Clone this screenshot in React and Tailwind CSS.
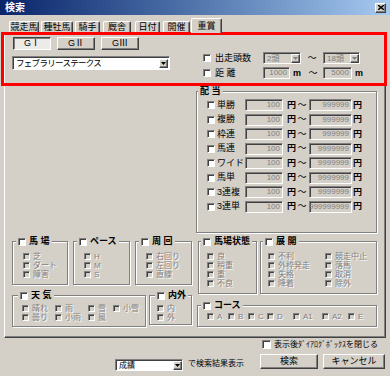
import React from 'react'

const raised = 'border border-t-white border-l-white border-r-[#404040] border-b-[#404040] shadow-[inset_-1px_-1px_0_#808080]'
const pressed = 'border border-t-[#404040] border-l-[#404040] border-r-white border-b-white shadow-[inset_1px_1px_0_#808080]'
const sunken = 'border border-t-[#808080] border-l-[#808080] border-r-white border-b-white shadow-[inset_1px_1px_0_#404040]'
const gray = 'text-[#808080] [text-shadow:1px_1px_0_#fff]'

const Check = ({ off, big }) => (
  <span
    className={`block shrink-0 ${big ? 'w-[9px] h-[9px]' : off ? 'w-[7px] h-[7px]' : 'w-[8px] h-[8px]'} ${sunken} ${off ? 'bg-[#d4d0c8]' : 'bg-white'}`}
  />
)

const DropBtn = ({ off }) => (
  <span className={`flex items-center justify-center w-[9px] h-full bg-[#d4d0c8] ${raised}`}>
    <svg width="5" height="3" viewBox="0 0 5 3">
      <path d="M0 0h5L2.5 3z" fill={off ? '#808080' : '#000'} />
    </svg>
  </span>
)

const Combo = ({ w, text, off }) => (
  <div className={`${w} h-[12px] flex items-stretch pt-[1px] pl-[1px] ${sunken} ${off ? 'bg-[#d4d0c8]' : 'bg-white'}`}>
    <span className={`flex-1 flex items-center pl-[2px] text-[8px] leading-none ${off ? 'text-[#808080]' : 'text-black'}`}>{text}</span>
    <DropBtn off={off} />
  </div>
)

const Field = ({ w, v }) => (
  <span className={`${w} h-[12px] shrink-0 flex items-center justify-end pr-[2px] bg-[#d4d0c8] ${sunken} text-[8px] leading-none text-[#808080]`}>
    {v}
  </span>
)

const Group = ({ cls, hl, head, children }) => (
  <div className={`relative shrink-0 border border-[#808080] shadow-[inset_1px_1px_0_#fff,1px_1px_0_#fff] ${cls}`}>
    <div className={`absolute top-[-5px] ${hl} h-[9px] px-[2px] flex items-center gap-[3px] bg-[#d4d0c8]`}>
      {head}
    </div>
    {children}
  </div>
)

const Head = ({ t }) => (
  <>
    <Check />
    <span className="text-[9px] leading-none font-bold whitespace-pre">{t}</span>
  </>
)

const Item = ({ t, cls = '' }) => (
  <div className={`h-[9px] flex items-center ${cls}`}>
    <Check off />
    <span className={`ml-[3px] text-[8px] leading-none whitespace-nowrap ${gray}`}>{t}</span>
  </div>
)

const tabs = [
  ['競走馬', 'w-[30px]', ''],
  ['種牡馬', 'w-[32px]', 'ml-[2px]'],
  ['騎手', 'w-[25px]', 'ml-[2px]'],
  ['厩舎', 'w-[28px]', 'ml-[3px]'],
  ['日付', 'w-[25px]', 'ml-[4px]'],
  ['開催', 'w-[27px]', 'ml-[3px]'],
]

const pays = [
  ['単勝', '999999'],
  ['複勝', '999999'],
  ['枠連', '999999'],
  ['馬連', '9999999'],
  ['ワイド', '9999999'],
  ['馬単', '9999999'],
  ['3連複', '9999999'],
  ['3連単', '999999999'],
]

const courses = [
  ['A', 'w-[21px]'],
  ['B', 'w-[20px]'],
  ['C', 'w-[19px]'],
  ['D', 'w-[26px]'],
  ['A1', 'w-[29px]'],
  ['A2', 'w-[26px]'],
  ['E', ''],
]

export default function App() {
  return (
    <div className="relative w-[390px] h-[376px] overflow-hidden bg-[#d4d0c8] font-['Liberation_Sans','Noto_Sans_CJK_JP',sans-serif] text-black">
      {/* title bar */}
      <div className="h-[15px] flex items-center justify-between pl-[5px] pr-[4px] bg-linear-to-r from-[#0a246a] to-[#a6caf0]">
        <span className="text-[10px] font-bold text-white leading-none">検索</span>
        <span className={`w-[11px] h-[10px] flex items-center justify-center bg-[#d4d0c8] ${raised}`}>
          <svg width="6" height="5" viewBox="0 0 6 5">
            <path d="M0 0l6 5M6 0L0 5" stroke="#000" strokeWidth="1.4" />
          </svg>
        </span>
      </div>

      {/* tabs */}
      <div className="relative z-10 flex items-end h-[17px] pl-[9px]">
        {tabs.map(([t, w, m]) => (
          <span
            key={t}
            className={`${w} ${m} h-[11px] flex items-center justify-center text-[9px] leading-none bg-[#d4d0c8] border border-b-0 border-t-white border-l-white border-r-[#404040] rounded-t-[2px] shadow-[inset_-1px_0_0_#808080]`}
          >
            {t}
          </span>
        ))}
        <span className="w-[31px] ml-[1px] h-[15px] mb-[-1px] flex items-center justify-center text-[9px] leading-none bg-[#d4d0c8] border border-b-0 border-t-white border-l-white border-r-[#404040] rounded-t-[2px] shadow-[inset_-1px_0_0_#808080]">
          重賞
        </span>
      </div>

      {/* tab page */}
      <div className="mx-[4px] h-[306px] border border-t-white border-l-white border-r-[#404040] border-b-[#404040] shadow-[inset_-1px_-1px_0_#808080]">
        {/* grade / race / counts */}
        <div className="flex h-[53px] pl-[7px] pt-[4px]">
          <div className="w-[158px]">
            <div className="flex gap-[6px] ml-[1px]">
              <span className={`w-[38px] h-[13px] flex items-center justify-center text-[9px] leading-none bg-[#ecebe8] ${pressed}`}>GⅠ</span>
              <span className={`w-[38px] h-[13px] flex items-center justify-center text-[9px] leading-none ${raised}`}>GⅡ</span>
              <span className={`w-[38px] h-[13px] flex items-center justify-center text-[9px] leading-none ${raised}`}>GⅢ</span>
            </div>
            <div className={`mt-[6px] w-[158px] h-[14px] flex items-stretch pt-[1px] pl-[1px] bg-white ${sunken}`}>
              <span className="flex-1 flex items-center pl-[2px] text-[8.5px] tracking-[-0.7px] leading-none">フェブラリーステークス</span>
              <span className="w-[10px] py-px">
                <DropBtn />
              </span>
            </div>
          </div>
          <div className="ml-[33px] pt-[15px]">
            <div className="flex items-center h-[12px]">
              <Check />
              <span className="ml-[4px] w-[48px] text-[9px] leading-none">出走頭数</span>
              <Combo w="w-[38px]" text="2頭" off />
              <span className="w-[22px] text-center text-[9px] leading-none">～</span>
              <Combo w="w-[37px]" text="18頭" off />
            </div>
            <div className="flex items-center h-[12px] mt-[3px]">
              <Check />
              <span className="ml-[4px] w-[48px] text-[9px] leading-none whitespace-pre">距 離</span>
              <Field w="w-[27px]" v="1000" />
              <span className="w-[13px] pl-[3px] text-[9px] font-bold leading-none">m</span>
              <span className="w-[20px] text-center text-[9px] leading-none">～</span>
              <Field w="w-[29px]" v="5000" />
              <span className="ml-[3px] text-[9px] font-bold leading-none">m</span>
            </div>
          </div>
        </div>

        {/* payouts */}
        <Group
          cls="mt-[5px] ml-[191px] w-[181px] h-[142px]"
          hl="left-[1px]"
          head={<span className="text-[9px] leading-none font-bold whitespace-pre">配 当</span>}
        >
          <div className="pt-[6px] pl-[10px]">
            {pays.map(([t, v]) => (
              <div key={t} className="h-[14.5px] flex items-center">
                <Check />
                <span className="ml-[2px] w-[28px] text-[9px] leading-none whitespace-nowrap">{t}</span>
                <Field w="w-[38px]" v="100" />
                <span className="w-[12px] pl-[4px] text-[9px] font-bold leading-none">円</span>
                <span className="w-[14px] text-center text-[9px] leading-none">～</span>
                <Field w="w-[43px]" v={v} />
                <span className="ml-[1px] text-[9px] font-bold leading-none">円</span>
              </div>
            ))}
          </div>
        </Group>

        {/* conditions row 1 */}
        <div className="flex items-start mt-[8px] pl-[7px]">
          <Group cls="w-[56px] h-[44px]" hl="left-[3px]" head={<Head t="馬 場" />}>
            <div className="pt-[10px] pl-[10px]">
              {['芝', 'ダート', '障害'].map((t) => <Item key={t} t={t} />)}
            </div>
          </Group>
          <Group cls="ml-[5px] w-[57px] h-[44px]" hl="left-[3px]" head={<Head t="ペース" />}>
            <div className="pt-[10px] pl-[10px]">
              {['H', 'M', 'S'].map((t) => <Item key={t} t={t} />)}
            </div>
          </Group>
          <Group cls="ml-[5px] w-[57px] h-[44px]" hl="left-[3px]" head={<Head t="周 回" />}>
            <div className="pt-[10px] pl-[10px]">
              {['右回り', '左回り', '直線'].map((t) => <Item key={t} t={t} />)}
            </div>
          </Group>
          <Group cls="ml-[6px] w-[59px] h-[53px]" hl="left-[2px]" head={<Head t="馬場状態" />}>
            <div className="pt-[10px] pl-[8px]">
              {['良', '稍重', '重', '不良'].map((t) => <Item key={t} t={t} />)}
            </div>
          </Group>
          <Group cls="ml-[3px] w-[117px] h-[53px]" hl="left-[2px]" head={<Head t="展 開" />}>
            <div className="pt-[10px] pl-[7px] grid grid-cols-[57px_1fr]">
              {['不利', '競走中止', '外枠発走', '落馬', '失格', '取消', '降着', '除外'].map((t) => (
                <Item key={t} t={t} />
              ))}
            </div>
          </Group>
        </div>

        {/* conditions row 2 */}
        <div className="flex items-start mt-[1px] pl-[7px]">
          <Group cls="w-[134px] h-[32px]" hl="left-[5px]" head={<Head t="天 気" />}>
            <div className="pt-[8px] pl-[9px] grid grid-cols-[33px_33px_25px_auto]">
              {['晴れ', '雨', '雪', '小雪', '曇り', '小雨', '風'].map((t) => (
                <Item key={t} t={t} />
              ))}
            </div>
          </Group>
          <Group cls="ml-[3px] w-[43px] h-[30px]" hl="left-[5px]" head={<Head t="内外" />}>
            <div className="pt-[8px] pl-[7px]">
              {['内', '外'].map((t) => <Item key={t} t={t} />)}
            </div>
          </Group>
          <Group cls="ml-[5px] mt-[10px] w-[180px] h-[22px]" hl="left-[3px]" head={<Head t="コース" />}>
            <div className="pt-[6px] pl-[9px] flex">
              {courses.map(([t, w]) => (
                <Item key={t} t={t} cls={w} />
              ))}
            </div>
          </Group>
        </div>
      </div>

      {/* footer */}
      <div className="flex items-center h-[11px] mt-[1px] pl-[262px]">
        <Check big />
        <span className="ml-[3px] text-[8px] leading-none whitespace-nowrap">表示後ﾀﾞｲｱﾛｸﾞﾎﾞｯｸｽを閉じる</span>
      </div>
      <div className="flex items-start mt-[4px]">
        <div className="ml-[115px] mt-[5px]">
          <Combo w="w-[68px]" text="成績" />
        </div>
        <span className="w-[77px] pl-[5px] mt-[6px] text-[8px] leading-none whitespace-nowrap">で検索結果表示</span>
        <span className={`w-[58px] h-[15px] flex items-center justify-center text-[9px] leading-none ${raised}`}>検索</span>
        <span className={`ml-[5px] w-[62px] h-[15px] flex items-center justify-center text-[9px] leading-none ${raised}`}>キャンセル</span>
      </div>

      {/* red highlight */}
      <div className="absolute left-[1px] top-[32px] w-[386px] h-[54px] border-[3px] border-[#ff0000] pointer-events-none" />
    </div>
  )
}
